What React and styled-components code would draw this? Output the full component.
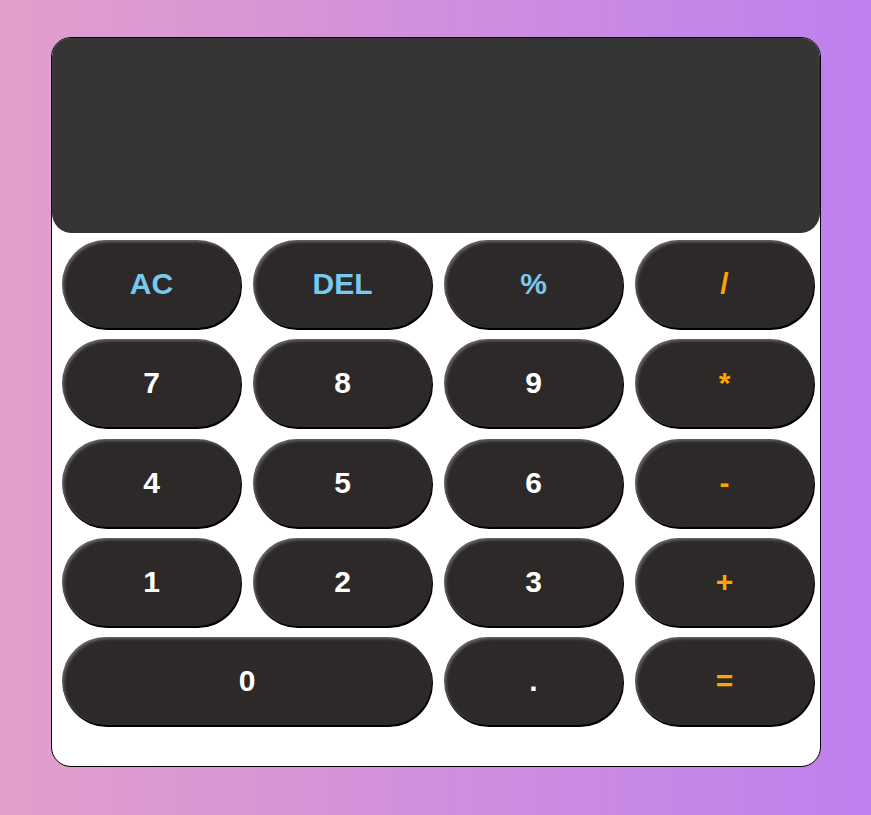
import React from "react";
import styled, { createGlobalStyle } from "styled-components";

const GlobalStyle = createGlobalStyle`
  * { box-sizing: border-box; }
  body {
    margin: 0;
    font-family: "Liberation Sans", Arial, sans-serif;
  }
`;

const Page = styled.div`
  min-height: 815px;
  background: linear-gradient(to right, #e29fcb, #bf80ef);
  padding-top: 37px;
`;

const Calculator = styled.div`
  width: 770px;
  height: 730px;
  margin: 0 auto 0 51px;
  background: #fff;
  border: 1px solid #000;
  border-radius: 20px;
  overflow: hidden;
`;

const Display = styled.div`
  height: 195px;
  background: #353535;
  border-radius: 0 0 20px 20px;
`;

const Keys = styled.div`
  display: grid;
  grid-template-columns: repeat(4, 179px);
  grid-auto-rows: 88px;
  column-gap: 12px;
  row-gap: 11.3px;
  padding: 7px 0 0 10px;
`;

const Key = styled.button`
  grid-column: ${(p) => (p.$wide ? "span 2" : "auto")};
  border: none;
  border-radius: 44px;
  background: #2d2928;
  color: ${(p) => p.$color || "#fff"};
  font-family: "Liberation Sans", Arial, sans-serif;
  font-weight: 700;
  font-size: 30px;
  padding: 0;
  box-shadow: inset 2px 2px 3px rgba(255, 255, 255, 0.28), 1px 2px 0 #000;
  cursor: pointer;
`;

const blue = "#78c9f0";
const orange = "#ffa500";

const keys = [
  { label: "AC", color: blue },
  { label: "DEL", color: blue },
  { label: "%", color: blue },
  { label: "/", color: orange },
  { label: "7" },
  { label: "8" },
  { label: "9" },
  { label: "*", color: orange },
  { label: "4" },
  { label: "5" },
  { label: "6" },
  { label: "-", color: orange },
  { label: "1" },
  { label: "2" },
  { label: "3" },
  { label: "+", color: orange },
  { label: "0", wide: true },
  { label: "." },
  { label: "=", color: orange },
];

const App = () => {
  return (
    <Page>
      <GlobalStyle />
      <Calculator>
        <Display />
        <Keys>
          {keys.map((k) => (
            <Key key={k.label} $color={k.color} $wide={k.wide}>
              {k.label}
            </Key>
          ))}
        </Keys>
      </Calculator>
    </Page>
  );
};

export default App;
